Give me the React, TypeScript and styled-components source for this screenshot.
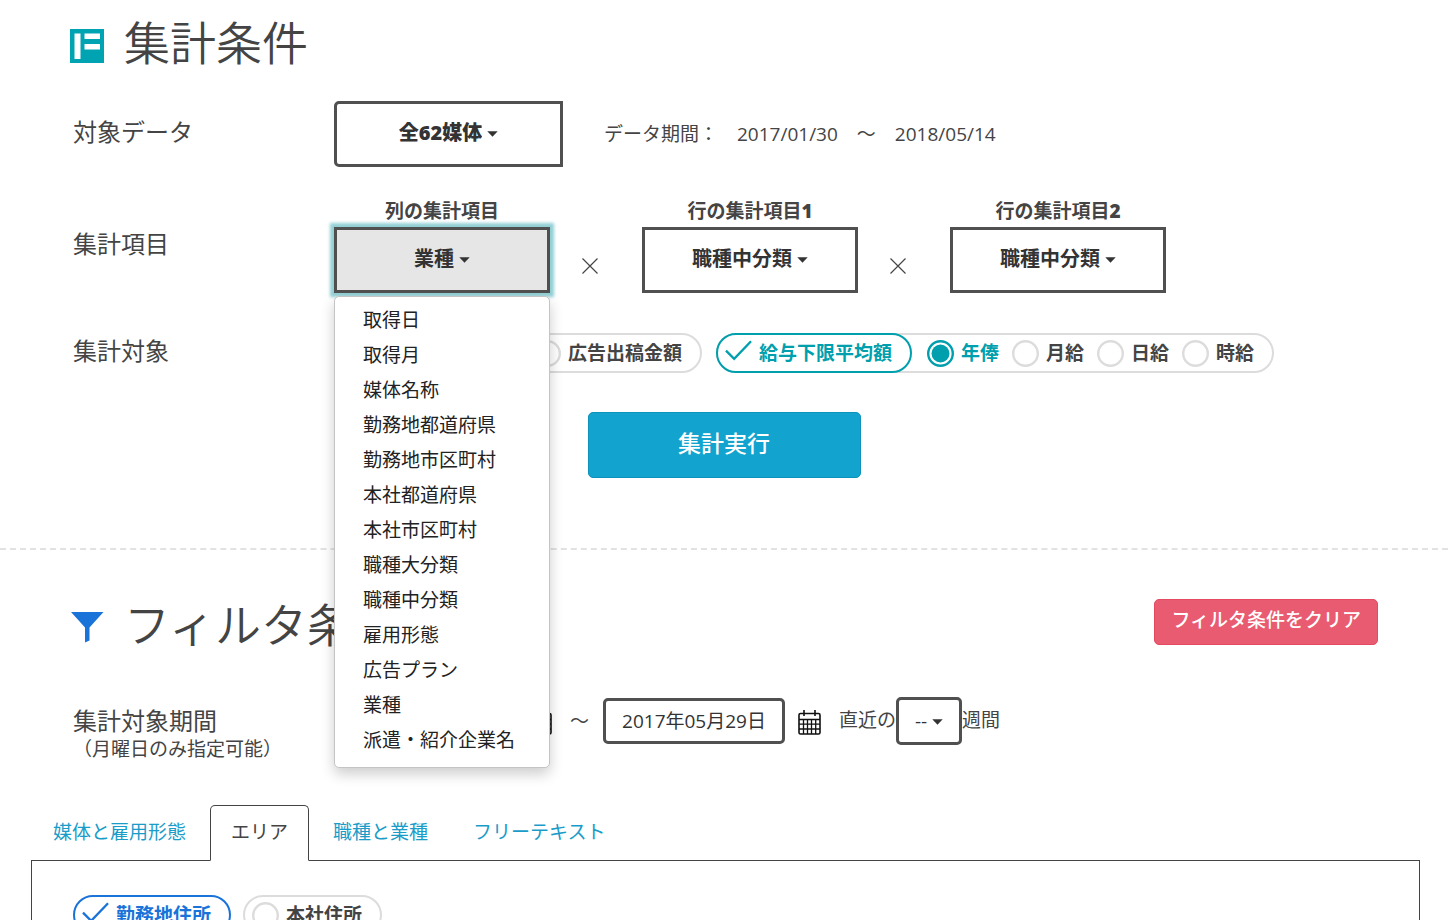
import React, { useState } from "react";
import styled, { createGlobalStyle, css } from "styled-components";

const GlobalStyle = createGlobalStyle`
  *, *::before, *::after { box-sizing: border-box; }
  body {
    margin: 0;
    background: #fff;
    color: #444;
    font-family: "Open Sans", "Noto Sans CJK JP", sans-serif;
    font-size: 19px;
    line-height: 26px;
  }
  button, input, select { font: inherit; color: inherit; margin: 0; }
`;

const TEAL = "#009fad";
const BLUE = "#1a73d9";
const LINE = "#505050";
const PALE = "#dcdcdc";

const Section = styled.section<{ $divided?: boolean }>`
  padding: ${(p) => (p.$divided ? "46px 70px 0" : "14px 70px 70px")};
  ${(p) => p.$divided && css`border-top: 2px dashed #e2e2e2;`}
`;

const HeadingRow = styled.header`
  display: flex;
  align-items: center;
  gap: 20px;
`;

const Heading = styled.h1`
  margin: 0;
  flex: 1;
  padding-bottom: 4px;
  font-size: 46px;
  line-height: 56px;
  font-weight: 350;
`;

const ClearButton = styled.button`
  align-self: flex-start;
  height: 46px;
  margin-top: 3px;
  padding: 0 16px 4px;
  border: 1px solid #e54a63;
  border-radius: 5px;
  background: #e95b70;
  color: #fff;
  font-weight: 500;
`;

const Row = styled.div<{ $gap: number; $top?: boolean }>`
  display: grid;
  grid-template-columns: 261px 1fr;
  align-items: ${(p) => (p.$top ? "start" : "center")};
  margin-top: ${(p) => p.$gap}px;
  padding-left: 3px;
`;

const RowLabel = styled.div`
  padding-bottom: 4px;
  font-size: 24px;
  line-height: 24px;
`;

const PeriodLabel = styled.div`
  padding-top: 12px;
`;

const Note = styled.div`
  font-size: 19px;
  line-height: 24px;
`;

const Controls = styled.div<{ $gap?: number; $end?: boolean }>`
  display: flex;
  align-items: ${(p) => (p.$end ? "flex-end" : "center")};
  gap: ${(p) => p.$gap ?? 0}px;
  white-space: nowrap;
`;

const boxStyle = css`
  display: flex;
  align-items: center;
  justify-content: center;
  gap: 5px;
  height: 66px;
  padding: 0 0 2px;
  border: 3px solid ${LINE};
  background: #fff;
  color: #333;
  font-size: 20px;
  font-weight: 700;
`;

const SelectBox = styled.div<{ $width: number; $radius?: string; $heavy?: boolean }>`
  ${boxStyle}
  width: ${(p) => p.$width}px;
  border-radius: ${(p) => p.$radius ?? "0"};
  ${(p) => p.$heavy && css`font-weight: 800;`}
`;

const WeeksBox = styled(SelectBox)`
  height: 48px;
  padding: 0;
  font-size: 19px;
  font-weight: 400;
`;

const Select = styled.select`
  appearance: none;
  field-sizing: content;
  padding: 0;
  border: 0;
  background: transparent;
  outline: none;
`;

const OpenButton = styled.button`
  ${boxStyle}
  width: 216px;
  background: #e6e6e6;
  box-shadow: 0 0 3px 4px #93d0d6;
`;

const Period = styled.p`
  margin: 0 0 0 41px;
`;

const Field = styled.div`
  position: relative;
  display: flex;
  flex-direction: column;
  align-items: center;
  gap: 3px;
`;

const FieldLabel = styled.label`
  font-weight: 700;
`;

const HeavyNumber = styled.span`
  font-weight: 800;
`;

const Times = styled.span`
  display: flex;
  align-items: center;
  justify-content: center;
  width: 92px;
  height: 54px;
  padding-right: 12px;
`;

const Menu = styled.ul`
  position: absolute;
  z-index: 10;
  top: 98px;
  left: 0;
  width: 216px;
  margin: 0;
  padding: 6px 0 9px;
  list-style: none;
  background: #fff;
  border: 1px solid #c4c4c4;
  border-radius: 5px;
  box-shadow: 0 6px 14px rgba(0, 0, 0, 0.2);
`;

const MenuItem = styled.li`
  padding: 0 28px;
  line-height: 35px;
  color: #222;
  cursor: pointer;
  white-space: nowrap;
`;

const Pill = styled.label<{ $color?: string; $joined?: boolean }>`
  display: flex;
  align-items: center;
  gap: 7px;
  height: 40px;
  padding: 0 18px 0 7px;
  border: 2px solid ${(p) => p.$color ?? PALE};
  border-radius: 20px;
  background: #fff;
  color: ${(p) => p.$color ?? "#444"};
  font-weight: 700;
  margin: ${(p) => (p.$joined ? "-2px 15px -2px -2px" : "0")};
`;

const PillGroup = styled.div`
  display: flex;
  align-items: center;
  height: 40px;
  padding-right: 18px;
  border: 2px solid ${PALE};
  border-radius: 20px;
`;

const Option = styled.label<{ $on: boolean }>`
  display: flex;
  align-items: center;
  gap: 7px;
  font-weight: 700;
  color: ${(p) => (p.$on ? TEAL : "#444")};
  & + & { margin-left: 13px; }
`;

const Mark = styled.span`
  position: relative;
  display: flex;
  width: 27px;
  height: 27px;
`;

const MarkInput = styled.input`
  position: absolute;
  inset: 0;
  width: 100%;
  height: 100%;
  appearance: none;
`;

const RunButton = styled.button`
  display: block;
  width: 273px;
  height: 66px;
  margin: 39px auto 0;
  padding: 0 0 4px;
  border: 1px solid #0d93bb;
  border-radius: 5px;
  background: #12a3ce;
  color: #fff;
  font-size: 23px;
  font-weight: 500;
`;

const DateInput = styled.input`
  width: 182px;
  height: 46px;
  padding: 0 0 2px;
  text-align: center;
  border: 3px solid ${LINE};
  border-radius: 5px;
  background: #fff;
  color: #333;
`;

const CalendarButton = styled.button`
  display: flex;
  padding: 3px 0 0;
  border: 0;
  background: none;
  margin: 0 18px 0 13px;
`;

const Tilde = styled.span`
  margin-right: 14px;
`;

const Inline = styled.span`
  padding-bottom: 3px;
`;

const Tabs = styled.nav`
  display: flex;
  gap: 3px;
  margin: 44px 28px 0 32px;
`;

const Tab = styled.a<{ $active?: boolean }>`
  height: 56px;
  padding: 13px 20px 0;
  border: 1px solid transparent;
  border-radius: 5px 5px 0 0;
  color: #1a9cc9;
  text-decoration: none;
  white-space: nowrap;
  ${(p) =>
    p.$active &&
    css`
      position: relative;
      background: #fff;
      border-color: #444;
      border-bottom-color: #fff;
      color: #444;
    `}
`;

const Panel = styled.div`
  display: flex;
  gap: 12px;
  margin: -1px 28px 0 31px;
  padding: 34px 41px;
  border: 1px solid #444;
`;

const CaretSvg = styled.svg`
  margin-top: 2px;
`;

const Caret = () => (
  <CaretSvg width="11" height="6" viewBox="0 0 11 6" aria-hidden="true">
    <path d="M0.300 0.300h10.400L5.500 5.700z" fill="#333" />
  </CaretSvg>
);

const SummaryIcon = () => (
  <svg width="34" height="38" viewBox="0 -4 34 38" aria-hidden="true">
    <path d="M0 0h34v34H0z" fill="#00a3b2" />
    <path d="M4.500 4.500h6V30h-6zM14.500 4.500H30v5.500H14.500zM14.500 15H30v5.500H14.500z" fill="#fff" />
  </svg>
);

const FunnelIcon = () => (
  <svg width="34" height="34" viewBox="0 -2 34 34" aria-hidden="true">
    <path d="M1 1h32.500L19.500 16.500V29.500L15 31.500V16.500z" fill={BLUE} />
  </svg>
);

const TimesIcon = () => (
  <svg width="16" height="16" viewBox="0 0 16 16" role="img" aria-label="×">
    <path d="M0.500 0.500l15 15M15.500 0.500l-15 15" stroke="#444" strokeWidth="1.200" />
  </svg>
);

const CalendarIcon = () => (
  <svg width="23" height="25" viewBox="0 0 23 25" fill="none" stroke="#111" aria-hidden="true">
    <rect x="1" y="3.500" width="21" height="20.500" rx="1.500" strokeWidth="1.600" />
    <path d="M6 0v6M17 0v6" strokeWidth="1.600" />
    <path d="M1 9.500h21M1 14.200h21M1 19h21M5.500 9.500V24M9.500 9.500V24M13.500 9.500V24M17.700 9.500V24" strokeWidth="1.300" />
  </svg>
);

const CheckDrawing = ({ color }: { color: string }) => (
  <svg width="28" height="27" viewBox="0 0 28 27" fill="none" aria-hidden="true">
    <path d="M1 10.500L9.500 19L27 0.800" stroke={color} strokeWidth="2.400" />
  </svg>
);

const CircleDrawing = ({ on }: { on?: boolean }) => (
  <svg width="27" height="27" viewBox="0 0 27 27" fill="none" aria-hidden="true">
    <circle cx="13.500" cy="13.500" r="12.300" stroke={on ? TEAL : PALE} strokeWidth="2.400" />
    {on && <circle cx="13.500" cy="13.500" r="9" fill={TEAL} />}
  </svg>
);

type PillCheckProps = { label: string; color?: string; joined?: boolean; type?: string; name?: string };

const PillCheck = ({ label, color, joined, type = "checkbox", name }: PillCheckProps) => (
  <Pill $color={color} $joined={joined}>
    <Mark>
      <MarkInput type={type} name={name} defaultChecked={!!color} />
      {color ? <CheckDrawing color={color} /> : <CircleDrawing />}
    </Mark>
    {label}
  </Pill>
);

const ITEMS = [
  "取得日", "取得月", "媒体名称", "勤務地都道府県", "勤務地市区町村", "本社都道府県", "本社市区町村",
  "職種大分類", "職種中分類", "雇用形態", "広告プラン", "業種", "派遣・紹介企業名",
];

const PAY_UNITS = ["年俸", "月給", "日給", "時給"];

export default function App() {
  const [column, setColumn] = useState("業種");
  const [unit, setUnit] = useState("年俸");

  return (
    <>
      <GlobalStyle />
      <main>
        <Section>
          <HeadingRow>
            <SummaryIcon />
            <Heading>集計条件</Heading>
          </HeadingRow>

          <Row $gap={27}>
            <RowLabel as="label" htmlFor="media">対象データ</RowLabel>
            <Controls>
              <SelectBox $width={229} $radius="5px 0 0 5px" $heavy>
                <Select id="media"><option>全62媒体</option></Select>
                <Caret />
              </SelectBox>
              <Period>データ期間：　2017/01/30　～　2018/05/14</Period>
            </Controls>
          </Row>

          <Row $gap={31}>
            <RowLabel>集計項目</RowLabel>
            <Controls $end>
              <Field>
                <FieldLabel htmlFor="column">列の集計項目</FieldLabel>
                <OpenButton id="column" type="button" aria-haspopup="listbox" aria-expanded="true">
                  {column}
                  <Caret />
                </OpenButton>
                <Menu role="listbox">
                  {ITEMS.map((item) => (
                    <MenuItem key={item} role="option" aria-selected={item === column} onClick={() => setColumn(item)}>
                      {item}
                    </MenuItem>
                  ))}
                </Menu>
              </Field>
              {["1", "2"].map((n) => (
                <React.Fragment key={n}>
                  <Times><TimesIcon /></Times>
                  <Field>
                    <FieldLabel htmlFor={"row" + n}>行の集計項目<HeavyNumber>{n}</HeavyNumber></FieldLabel>
                    <SelectBox $width={216}>
                      <Select id={"row" + n}><option>職種中分類</option></Select>
                      <Caret />
                    </SelectBox>
                  </Field>
                </React.Fragment>
              ))}
            </Controls>
          </Row>

          <Row $gap={40}>
            <RowLabel>集計対象</RowLabel>
            <Controls $gap={14}>
              <PillCheck label="広告掲載件数" />
              <PillCheck label="広告出稿金額" />
              <PillGroup>
                <PillCheck label="給与下限平均額" color={TEAL} joined />
                {PAY_UNITS.map((u) => (
                  <Option key={u} $on={u === unit}>
                    <Mark>
                      <MarkInput type="radio" name="unit" checked={u === unit} onChange={() => setUnit(u)} />
                      <CircleDrawing on={u === unit} />
                    </Mark>
                    {u}
                  </Option>
                ))}
              </PillGroup>
            </Controls>
          </Row>

          <RunButton type="button">集計実行</RunButton>
        </Section>

        <Section $divided>
          <HeadingRow>
            <FunnelIcon />
            <Heading as="h2">フィルタ条件</Heading>
            <ClearButton type="button">フィルタ条件をクリア</ClearButton>
          </HeadingRow>

          <Row $gap={41} $top>
            <PeriodLabel>
              <RowLabel>集計対象期間</RowLabel>
              <Note>（月曜日のみ指定可能）</Note>
            </PeriodLabel>
            <Controls>
              <DateInput aria-label="開始日" defaultValue="2017年05月22日" />
              <CalendarButton type="button" aria-label="開始日を選択"><CalendarIcon /></CalendarButton>
              <Tilde>～</Tilde>
              <DateInput aria-label="終了日" defaultValue="2017年05月29日" />
              <CalendarButton type="button" aria-label="終了日を選択"><CalendarIcon /></CalendarButton>
              <Inline as="label" htmlFor="weeks">直近の</Inline>
              <WeeksBox $width={66} $radius="5px">
                <Select id="weeks"><option>--</option></Select>
                <Caret />
              </WeeksBox>
              <Inline>週間</Inline>
            </Controls>
          </Row>
        </Section>

        <Tabs>
          <Tab href="#media">媒体と雇用形態</Tab>
          <Tab href="#area" $active>エリア</Tab>
          <Tab href="#job">職種と業種</Tab>
          <Tab href="#text">フリーテキスト</Tab>
        </Tabs>
        <Panel>
          <PillCheck label="勤務地住所" color={BLUE} type="radio" name="address" />
          <PillCheck label="本社住所" type="radio" name="address" />
        </Panel>
      </main>
    </>
  );
}
